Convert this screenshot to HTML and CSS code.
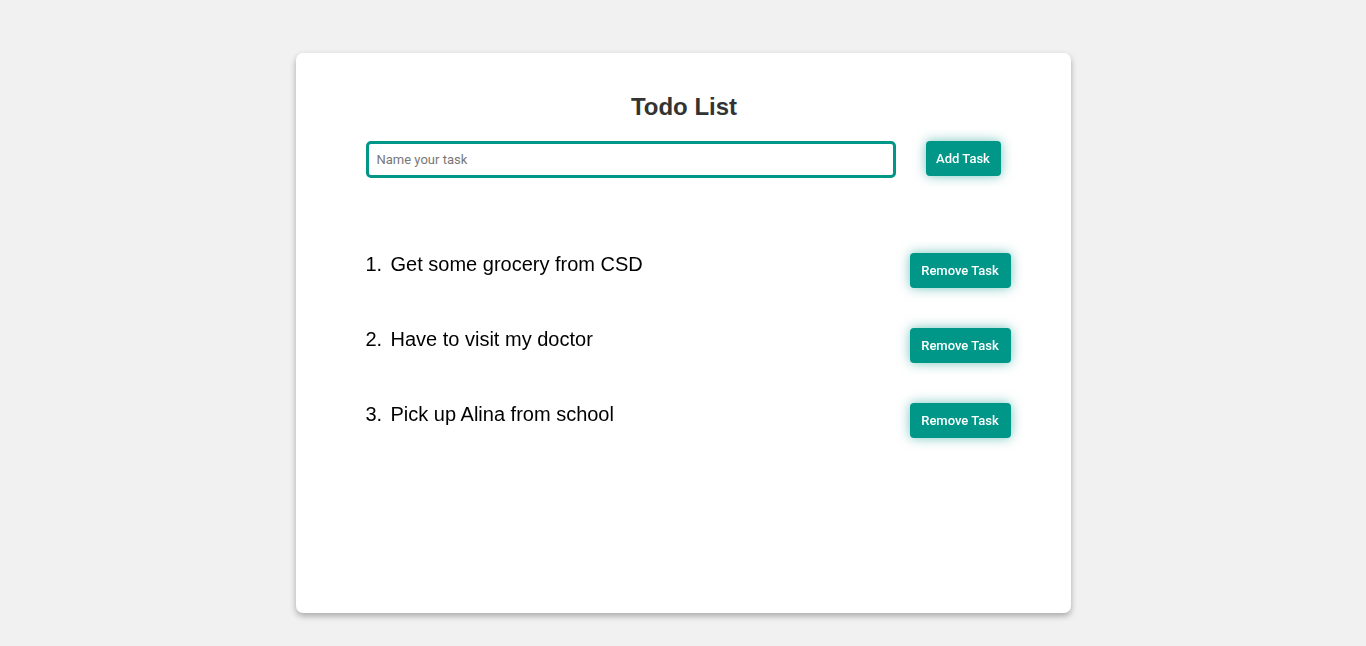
FILE: index.html
```html
<!DOCTYPE html>
<html lang="en">
<head>
<meta charset="utf-8">
<title>Todo List</title>
<link rel="stylesheet" href="styles.css">
</head>
<body>
  <main class="card">
    <h1 class="title">Todo List</h1>
    <div class="entry">
      <input class="task-input" type="text" placeholder="Name your task" autofocus>
      <button class="btn btn-add">Add Task</button>
    </div>
    <ol class="tasks">
      <li class="task">
        <span class="task-num">1.</span>
        <span class="task-text">Get some grocery from CSD</span>
        <button class="btn btn-remove">Remove Task</button>
      </li>
      <li class="task">
        <span class="task-num">2.</span>
        <span class="task-text">Have to visit my doctor</span>
        <button class="btn btn-remove">Remove Task</button>
      </li>
      <li class="task">
        <span class="task-num">3.</span>
        <span class="task-text">Pick up Alina from school</span>
        <button class="btn btn-remove">Remove Task</button>
      </li>
    </ol>
  </main>
</body>
</html>
```

FILE: styles.css
```css
* { box-sizing: border-box; }

html, body {
  margin: 0;
  padding: 0;
}

body {
  background: #f1f1f1;
  font-family: "Liberation Sans", Arial, sans-serif;
  padding-top: 53px;
  min-height: 646px;
}

.card {
  width: 775px;
  height: 560px;
  margin: 0 auto;
  background: #fff;
  border-radius: 7px;
  box-shadow: 0 3px 6px rgba(0, 0, 0, 0.3);
  padding: 40px 70px 0 70px;
}

.title {
  margin: 0 0 0 2px;
  font-size: 24px;
  line-height: 28px;
  font-weight: bold;
  color: #333;
  text-align: center;
}

.entry {
  display: flex;
  align-items: flex-start;
  gap: 30px;
  margin-top: 20px;
}

.task-input {
  flex: 1;
  height: 37px;
  border: 3px solid #009688;
  border-radius: 5px;
  padding: 0 8px;
  font-family: Roboto, "Liberation Sans", sans-serif;
  font-size: 13px;
  color: #333;
  outline: none;
}

.task-input::placeholder {
  color: #777;
}

.btn {
  height: 35px;
  padding: 0 11px;
  border: none;
  border-radius: 4px;
  background: #009688;
  color: #fff;
  font-family: Roboto, "Liberation Sans", sans-serif;
  font-size: 13px;
  font-weight: 500;
  box-shadow: 0 0 12px rgba(0, 150, 136, 0.55);
  cursor: pointer;
}

.btn-add {
  width: 75px;
  padding: 0;
}

.btn-remove {
  width: 101px;
  padding: 0;
}

.tasks {
  list-style: none;
  margin: 75px -10px 0 0;
  padding: 0;
}

.task {
  display: flex;
  align-items: flex-start;
  margin-bottom: 40px;
  font-size: 20px;
  line-height: 23px;
  color: #000;
}

.task-num {
  width: 25px;
  flex: none;
}

.task-text {
  flex: 1;
}
```
